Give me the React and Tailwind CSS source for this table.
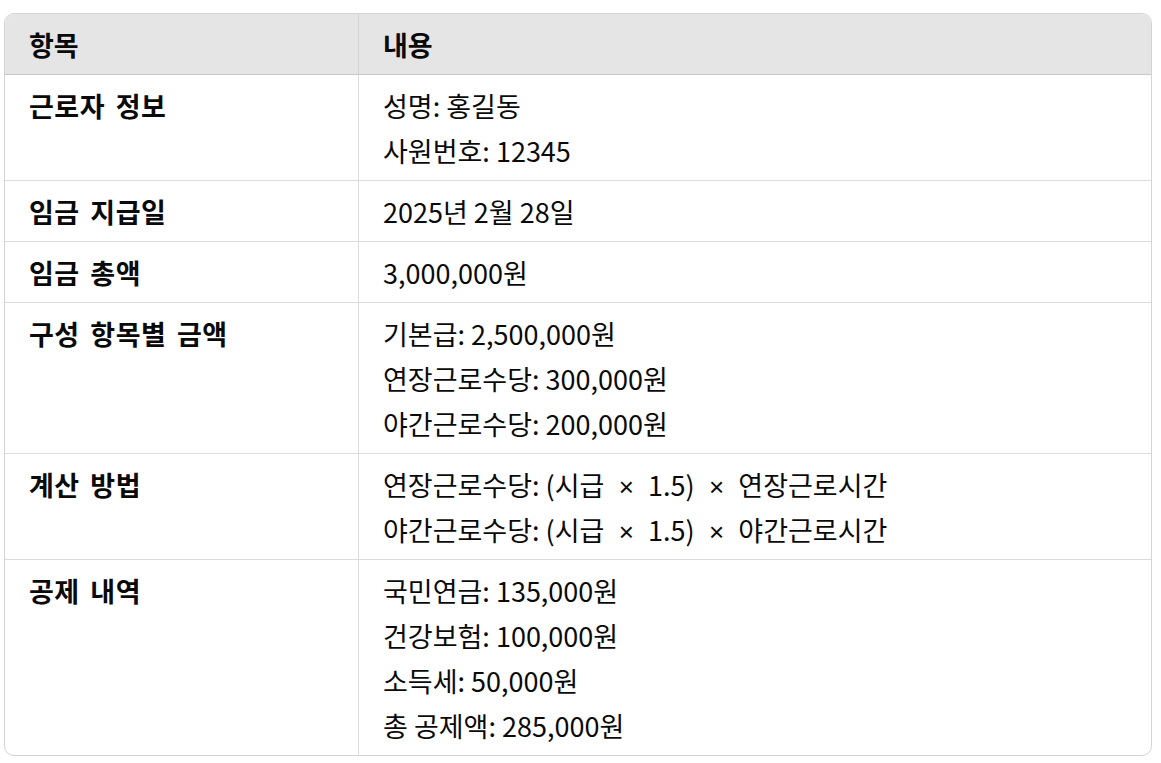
const rows = [
  { label: "근로자 정보", lines: ["성명: 홍길동", "사원번호: 12345"] },
  { label: "임금 지급일", lines: ["2025년 2월 28일"] },
  { label: "임금 총액", lines: ["3,000,000원"] },
  {
    label: "구성 항목별 금액",
    lines: ["기본급: 2,500,000원", "연장근로수당: 300,000원", "야간근로수당: 200,000원"],
  },
  {
    label: "계산 방법",
    lines: [
      ["연장근로수당: (시급", "1.5)", "연장근로시간"],
      ["야간근로수당: (시급", "1.5)", "야간근로시간"],
    ],
  },
  {
    label: "공제 내역",
    lines: ["국민연금: 135,000원", "건강보험: 100,000원", "소득세: 50,000원", "총 공제액: 285,000원"],
  },
];

// formula lines: the × sign is a small latin glyph with wide gaps
const Times = () => (
  <span className="px-[7px] font-['Liberation_Sans'] text-[26px] leading-none"> × </span>
);

const Line = ({ line }) => {
  if (typeof line === "string") return <p>{line}</p>;
  const [a, b, c] = line;
  return (
    <p>
      {a}
      <Times />
      {b}
      <Times />
      {c}
    </p>
  );
};

const App = () => {
  return (
    <div
      className="min-h-screen bg-white pl-1 pr-[9px] pt-[13px] text-[27px] text-[#0a0a0a]"
      style={{ fontFamily: '"Noto Sans CJK KR", sans-serif' }}
    >
      <div className="w-[1148px] overflow-hidden rounded-[10px] border border-[#d4d4d4]">
        <div className="grid grid-cols-[354px_1fr] border-b border-[#c8c8c8] bg-[#e5e5e5] font-bold">
          <div className="border-r border-[#d4d4d4] px-6 py-[7.5px] leading-[45px]">항목</div>
          <div className="px-6 py-[7.5px] leading-[45px]">내용</div>
        </div>
        {rows.map((row, i) => (
          <div
            key={row.label}
            className={`grid grid-cols-[354px_1fr] ${i < rows.length - 1 ? "border-b border-[#dcdcdc]" : ""}`}
          >
            <div className="border-r border-[#dcdcdc] px-6 py-[7.5px] font-bold leading-[45px] tracking-[0.5px] [word-spacing:4px]">
              {row.label}
            </div>
            <div className="px-6 py-[7.5px] leading-[45px]">
              {row.lines.map((line, j) => (
                <Line key={j} line={line} />
              ))}
            </div>
          </div>
        ))}
      </div>
    </div>
  );
};

export default App;
